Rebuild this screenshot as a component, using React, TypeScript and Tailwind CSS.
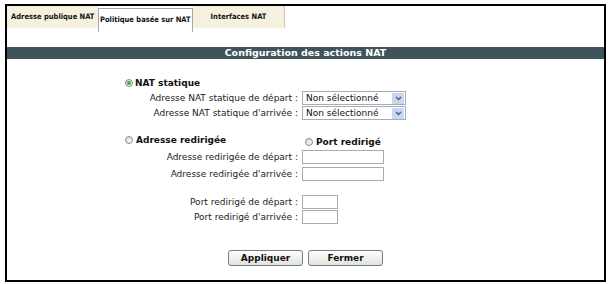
import React from 'react';

const Radio = ({ checked }: { checked?: boolean }) => (
  <span className="inline-flex w-[8px] h-[8px] shrink-0 items-center justify-center rounded-full border border-[#7b8d9c] bg-gradient-to-br from-[#d8d8d0] to-white">
    {checked && <span className="w-[4px] h-[4px] rounded-full bg-[#44a844]" />}
  </span>
);

const FakeSelect = ({ value }: { value: string }) => (
  <div className="flex items-center w-[104px] h-[14px] border border-[#a5acb2] bg-white pl-[3px] pr-[1px]">
    <span className="flex-1 text-[9px] leading-none text-[#111]">{value}</span>
    <span className="flex items-center justify-center w-[12px] h-[11px] rounded-[1px] bg-[#c9d6f2]">
      <svg width="7" height="5" viewBox="0 0 7 5">
        <path d="M1 1l2.5 2.5L6 1" stroke="#4a5f8a" strokeWidth="1.5" fill="none" />
      </svg>
    </span>
  </div>
);

const TextBox = ({ w }: { w: string }) => (
  <div className={`h-[14px] border border-[#a5acb2] bg-white ${w}`} />
);

const Row = ({ label, children, className = '' }: { label: string, children: React.ReactNode, className?: string }) => (
  <div className={`flex items-center ${className}`}>
    <div className="w-[295px] pr-[4px] text-right text-[9px] leading-none text-[#222]">{label}</div>
    {children}
  </div>
);

const Btn = ({ children }: { children: React.ReactNode }) => (
  <button className="w-[75px] h-[16px] rounded-[3px] border border-[#6f7c88] bg-gradient-to-b from-white to-[#e2e2dc] text-[9px] font-bold leading-none text-[#111]">
    {children}
  </button>
);

export default function App() {
  return (
    <div className="w-[610px] h-[284px] bg-white pt-[4px] pl-[5px] font-['DejaVu_Sans',sans-serif]">
      <div className="w-[601px] h-[278px] border-2 border-black">
        {/* tabs */}
        <div className="flex h-[24px] font-['DejaVu_Sans_Condensed','DejaVu_Sans',sans-serif] text-[7.5px] font-bold whitespace-nowrap text-[#111]">
          <div className="flex items-center w-[91px] h-[22px] bg-[#f6f1df] pl-[4px]">Adresse publique NAT</div>
          <div className="flex items-start w-[95px] h-[24px] mt-[2px] pt-[5px] bg-white border-t border-l border-r border-[#a8a8a8] pl-[1px]">Politique basée sur NAT</div>
          <div className="flex items-center justify-center w-[92px] h-[22px] bg-[#f6f1df] border-r border-[#c8c8c8]">Interfaces NAT</div>
        </div>

        <div className="mt-[17px] h-[12px] bg-[#3f535b] flex items-center justify-center text-[9.5px] font-bold leading-none text-white">
          Configuration des actions NAT
        </div>

        {/* NAT statique */}
        <div className="mt-[18px] flex items-center h-[12px] pl-[118px] gap-[2px]">
          <Radio checked />
          <span className="text-[9px] font-bold leading-none text-[#111]">NAT statique</span>
        </div>
        <div className="mt-[2px] flex flex-col gap-[1px]">
          <Row label="Adresse NAT statique de départ :"><FakeSelect value="Non sélectionné" /></Row>
          <Row label="Adresse NAT statique d'arrivée :"><FakeSelect value="Non sélectionné" /></Row>
        </div>

        {/* redirection */}
        <div className="mt-[14px] flex items-start h-[14px]">
          <div className="w-[298px] flex items-center h-[12px] pl-[118px] gap-[3px]">
            <Radio />
            <span className="text-[9px] font-bold leading-none text-[#111]">Adresse redirigée</span>
          </div>
          <div className="flex items-center h-[12px] mt-[2px] gap-[3px]">
            <Radio />
            <span className="text-[9px] font-bold leading-none text-[#111]">Port redirigé</span>
          </div>
        </div>
        <div className="mt-[2px] flex flex-col gap-[3px]">
          <Row label="Adresse redirigée de départ :"><TextBox w="w-[82px]" /></Row>
          <Row label="Adresse redirigée d'arrivée :"><TextBox w="w-[82px]" /></Row>
        </div>
        <div className="mt-[14px] flex flex-col gap-[1px]">
          <Row label="Port redirigé de départ :"><TextBox w="w-[36px]" /></Row>
          <Row label="Port redirigé d'arrivée :"><TextBox w="w-[36px]" /></Row>
        </div>

        <div className="mt-[26px] flex justify-center gap-[5px]">
          <Btn>Appliquer</Btn>
          <Btn>Fermer</Btn>
        </div>
      </div>
    </div>
  );
}
